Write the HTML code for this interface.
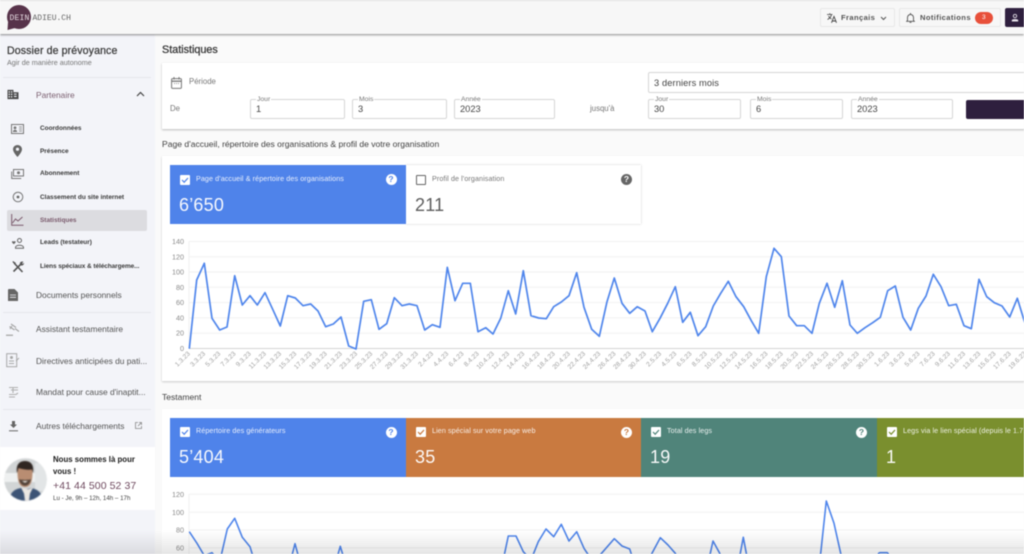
<!DOCTYPE html>
<html lang="fr">
<head>
<meta charset="utf-8">
<title>Statistiques</title>
<style>
html,body{margin:0;padding:0;width:1024px;height:554px;overflow:hidden;background:#fafafa}
body{font-family:"Liberation Sans",sans-serif;position:relative;color:#333}
#root{position:absolute;left:0;top:0;width:1024px;height:554px;overflow:hidden;filter:blur(.4px)}
.a{position:absolute}
.t{position:absolute;white-space:nowrap;line-height:1}
.sub{font-size:6.45px;font-weight:bold;color:#3a3a3a;left:40px;margin-top:.8px}
.nav{font-size:8.4px;color:#555;left:36px}
.div{position:absolute;left:3px;width:148px;height:1px;background:#e6e6ec}
.inp{position:absolute;height:18px;border:1px solid #d6d6d6;border-radius:2px;background:#fff}
.lab{position:absolute;left:5px;top:-4px;background:#fff;padding:0 1px;font-size:6.8px;line-height:7px;color:#777}
.val{position:absolute;left:5px;top:4px;font-size:9.3px;line-height:10px;color:#444}
.tile{position:absolute;height:59px;color:#fff;overflow:hidden}
.cb{position:absolute;left:10px;top:9.5px;width:10px;height:10px;background:#fff;border-radius:1px}
.cb svg{position:absolute;left:0;top:0}
.tl{position:absolute;left:26px;top:9.8px;font-size:7.15px;line-height:9px;white-space:nowrap;opacity:.88;letter-spacing:.1px}
.tv{position:absolute;left:9px;top:28.5px;font-size:18px;line-height:23px;letter-spacing:.2px;opacity:.95}
.q{position:absolute;top:9px;width:11px;height:11px;border-radius:50%;background:#fff;font-size:8.5px;line-height:11px;text-align:center;font-weight:bold}
.ax text{font-size:7.2px;fill:#8a8a8a;text-anchor:end}
.dl text{font-size:6.6px;fill:#a0a0a0;text-anchor:end}
.ic{position:absolute}
</style>
</head>
<body>
<div id="root">

<!-- sidebar -->
<div class="a" style="left:0;top:34px;width:155px;height:520px;background:#f3f4f9"></div>
<div class="t" style="left:7px;top:45.7px;font-size:10.6px;color:#3b3b3b;letter-spacing:.1px;-webkit-text-stroke:.25px #3b3b3b">Dossier de prévoyance</div>
<div class="t" style="left:7px;top:59px;font-size:7.2px;color:#777">Agir de manière autonome</div>
<div class="div" style="top:77px"></div>

<svg class="ic" style="left:7px;top:89px" width="12" height="11" viewBox="0 0 12 12"><path fill="#4a4a4a" d="M0 1h6.500v2.500H12V11H0zM1.200 2.500v1.500h1.400V2.500zM3.800 2.500v1.500h1.400V2.500zM1.200 5v1.500h1.400V5zM3.800 5v1.500h1.400V5zM1.200 7.800v1.500h1.400V7.800zM3.800 7.800v1.500h1.400V7.800zM7 5v1.200h3V5zM7 7.500v1.200h3V7.500z" fill-rule="evenodd"/></svg>
<div class="t nav" style="top:91px;color:#7b5f70">Partenaire</div>
<svg class="ic" style="left:136px;top:91px" width="9" height="6" viewBox="0 0 9 6"><path d="M1 5l3.500-3.500L8 5" fill="none" stroke="#444" stroke-width="1.200"/></svg>

<svg class="ic" style="left:11px;top:123.500px" width="13" height="10" viewBox="0 0 13 10"><rect x=".5" y=".5" width="12" height="9" fill="none" stroke="#777" stroke-width="1"/><circle cx="4" cy="3.800" r="1.400" fill="#777"/><path d="M1.800 8c0-3 4.400-3 4.400 0z" fill="#777"/><path d="M8 3h3M8 5h3M8 7h3" stroke="#777" stroke-width=".8"/></svg>
<div class="t sub" style="top:125px">Coordonnées</div>
<svg class="ic" style="left:13px;top:145px" width="9" height="12" viewBox="0 0 9 12"><path fill="#666" d="M4.500 0C2 0 0 2 0 4.300 0 7.500 4.500 12 4.500 12S9 7.500 9 4.300C9 2 7 0 4.500 0zm0 5.800a1.600 1.600 0 1 1 0-3.200 1.600 1.600 0 0 1 0 3.200z" fill-rule="evenodd"/></svg>
<div class="t sub" style="top:148px">Présence</div>
<svg class="ic" style="left:11px;top:169px" width="13" height="10" viewBox="0 0 13 10"><rect x="2.500" y=".5" width="10" height="6.500" fill="none" stroke="#777" stroke-width="1"/><circle cx="7.500" cy="3.700" r="1.500" fill="#777"/><path d="M.7 2.500v7h9.500" fill="none" stroke="#777" stroke-width="1"/></svg>
<div class="t sub" style="top:170.700px">Abonnement</div>
<svg class="ic" style="left:12px;top:191px" width="12" height="12" viewBox="0 0 12 12"><circle cx="6" cy="6" r="4.800" fill="none" stroke="#777" stroke-width="1"/><circle cx="6" cy="6" r="1.400" fill="#666"/></svg>
<div class="t sub" style="top:194px">Classement du site internet</div>
<div class="a" style="left:7px;top:210px;width:140px;height:20.500px;background:#dcdce0;border-radius:2px"></div>
<svg class="ic" style="left:11px;top:214px" width="13" height="12" viewBox="0 0 13 12"><path d="M.7 0v11.300H12.500" fill="none" stroke="#7a5a6c" stroke-width="1"/><path d="M1.500 9l3-4 2.500 2 4.500-4" fill="none" stroke="#7a5a6c" stroke-width="1"/></svg>
<div class="t sub" style="top:217px;color:#7a5a6c">Statistiques</div>
<svg class="ic" style="left:11px;top:238px" width="14" height="11" viewBox="0 0 14 11"><circle cx="8.500" cy="2.500" r="2" fill="none" stroke="#666" stroke-width="1"/><path d="M4.500 9.500c0-3 8-3 8 0v.8h-8z" fill="none" stroke="#666" stroke-width="1"/><path d="M1 3.500c1-.8 1.500-.3 1.800.2.300-.5 1-1 1.800-.2.500.8-1 2-1.800 2.700C2 5.500.5 4.300 1 3.500z" fill="#666"/></svg>
<div class="t sub" style="top:239.700px">Leads (testateur)</div>
<svg class="ic" style="left:12px;top:261px" width="12" height="12" viewBox="0 0 12 12"><path d="M2.500 2.500l8 8.500M10 2L1.500 10.500" stroke="#555" stroke-width="1.600" fill="none"/><path d="M1 0l3 2-1.500 1.500L.5 1zM7.800 2.500C8 .8 10 0 11.500.8L10 2.200l.8.800 1.200-1.200c.3 1.500-1 3-2.700 2.800z" fill="#555"/></svg>
<div class="t sub" style="top:263px;letter-spacing:-.06px">Liens spéciaux &amp; téléchargeme...</div>

<svg class="ic" style="left:8px;top:289px" width="10" height="12" viewBox="0 0 10 12"><path fill="#666" d="M1 0h5.500L10 3.500V12H0V1a1 1 0 0 1 1-1z"/><path d="M2 6h6M2 8.300h6" stroke="#f3f4f9" stroke-width=".8"/></svg>
<div class="t nav" style="top:291px">Documents personnels</div>
<div class="div" style="top:312px"></div>
<svg class="ic" style="left:6px;top:323px" width="14" height="13" viewBox="0 0 14 13"><path d="M5 1l5 3.500M3.500 3.500l5 3.500M6 3l-2 3M9 5.500l4 3" stroke="#a5a5a5" stroke-width="1.100" fill="none"/><path d="M0 11.500h7V13H0z" fill="#b0b0b0"/></svg>
<div class="t nav" style="top:325.200px">Assistant testamentaire</div>
<svg class="ic" style="left:6px;top:353px" width="14" height="15" viewBox="0 0 14 15"><rect x=".7" y=".7" width="10" height="13" fill="none" stroke="#a8a8a8" stroke-width="1"/><circle cx="5.500" cy="4.500" r="1.500" fill="#a8a8a8"/><path d="M3 8h5M3 10.500h5M10 8l3-3" stroke="#a8a8a8" stroke-width="1"/></svg>
<div class="t nav" style="top:356.500px">Directives anticipées du pati...</div>
<svg class="ic" style="left:8px;top:386px" width="11" height="13" viewBox="0 0 11 13"><path d="M1 1.500h9M3 4h7M5 1.500V7M1 8.500h7l2-1.500M1 11h6" stroke="#b0b0b0" stroke-width="1.100" fill="none"/></svg>
<div class="t nav" style="top:388px">Mandat pour cause d'inaptit...</div>
<div class="div" style="top:409px"></div>
<svg class="ic" style="left:9px;top:421px" width="9" height="11" viewBox="0 0 9 11"><path d="M3 0h3v3.500h2L4.500 7 1 3.500h2z" fill="#666"/><path d="M0 9.800h9" stroke="#666" stroke-width="1"/></svg>
<div class="t nav" style="top:421.800px">Autres téléchargements</div>
<svg class="ic" style="left:135px;top:422px" width="7" height="7" viewBox="0 0 7 7"><path d="M3 .5H.5v6h6V4M4 .5h2.500V3M6.500.5L3 4" fill="none" stroke="#888" stroke-width=".8"/></svg>

<!-- contact -->
<div class="a" style="left:0;top:447px;width:155px;height:62.500px;background:#fff"></div>
<svg class="ic" style="left:4px;top:458px;filter:blur(.5px)" width="43" height="43" viewBox="0 0 43 43">
<defs><clipPath id="cp"><circle cx="21.500" cy="21.500" r="21.300"/></clipPath></defs>
<g clip-path="url(#cp)">
<rect width="43" height="43" fill="#d2d5d6"/>
<rect x="0" y="15" width="43" height="9" fill="#eef0f0"/>
<rect x="31" y="5" width="12" height="28" fill="#e2e5e6"/>
<path d="M5 43c1-9 6-12 12-13l4 2 6-2c6 1 11 4 12 13z" fill="#3d5476"/>
<path d="M17 29.500l3 6 1 7.500h4l1-7.500 3-6-5 2z" fill="#ebe7e2"/>
<path d="M13.500 13c0-9 15-9 15 0 0 7-.5 16-7.500 16S13.500 20 13.500 13z" fill="#b98d72"/>
<path d="M13 15c-1.500-10 4-12 8-12s9.500 2 8 12l-1-3.500c-4 .5-9 0-13.500-1.500z" fill="#2f2622"/>
<path d="M15 21c1.500 9 10.500 9 12 0-1 1-3 .5-6 1-3-.5-5 0-6-1z" fill="#54443a"/>
<path d="M18 23h6l-3 1.800z" fill="#f0ece6"/>
</g></svg>
<div class="t" style="left:53px;top:455.500px;font-size:7.85px;font-weight:bold;color:#1c1c1c">Nous sommes là pour</div>
<div class="t" style="left:53px;top:468px;font-size:7.85px;font-weight:bold;color:#1c1c1c">vous !</div>
<div class="t" style="left:53px;top:481px;font-size:10.500px;color:#6f4a5f;letter-spacing:.08px">+41 44 500 52 37</div>
<div class="t" style="left:53px;top:496px;font-size:6.200px;color:#444">Lu - Je, 9h – 12h, 14h – 17h</div>

<!-- main heading -->
<div class="t" style="left:162px;top:45px;font-size:10.800px;color:#333;-webkit-text-stroke:.25px #333">Statistiques</div>

<!-- period card -->
<div class="a" style="left:162px;top:63px;width:870px;height:65.500px;background:#fff;box-shadow:0 1px 2px rgba(0,0,0,.25)"></div>
<svg class="ic" style="left:171px;top:77px" width="11" height="12" viewBox="0 0 11 12"><rect x=".6" y="1.600" width="9.800" height="9.800" rx="1" fill="none" stroke="#777" stroke-width="1"/><path d="M.6 4.200h9.800" stroke="#777" stroke-width="1.300"/><path d="M3 0v2.500M8 0v2.500" stroke="#777" stroke-width="1"/><path d="M3 6.500h1M5 6.500h1M7 6.500h1" stroke="#999" stroke-width="1"/></svg>
<div class="t" style="left:189px;top:78px;font-size:7.800px;color:#777">Période</div>
<div class="t" style="left:170px;top:105px;font-size:7.800px;color:#777">De</div>
<div class="t" style="left:590px;top:105px;font-size:7.800px;color:#777">jusqu'à</div>

<div class="inp" style="left:250px;top:99px;width:93px"><span class="lab">Jour</span><span class="val">1</span></div>
<div class="inp" style="left:352px;top:99px;width:93px"><span class="lab">Mois</span><span class="val">3</span></div>
<div class="inp" style="left:454px;top:99px;width:99px"><span class="lab">Année</span><span class="val">2023</span></div>
<div class="inp" style="left:648px;top:99px;width:91px"><span class="lab">Jour</span><span class="val">30</span></div>
<div class="inp" style="left:750px;top:99px;width:91px"><span class="lab">Mois</span><span class="val">6</span></div>
<div class="inp" style="left:851px;top:99px;width:100px"><span class="lab">Année</span><span class="val">2023</span></div>
<div class="inp" style="left:648px;top:72px;width:400px;height:19px"><span class="val" style="top:4.500px;left:5px;letter-spacing:.1px">3 derniers mois</span></div>
<div class="a" style="left:966px;top:100px;width:80px;height:19px;background:#2e1f3e;border-radius:2px"></div>

<!-- section 1 -->
<div class="t" style="left:162px;top:140px;font-size:8.550px;color:#3f3f3f">Page d'accueil, répertoire des organisations &amp; profil de votre organisation</div>
<div class="a" style="left:162px;top:156px;width:870px;height:225px;background:#fff;box-shadow:0 1px 2px rgba(0,0,0,.2)"></div>
<div class="a" style="left:406px;top:165px;width:235px;height:59px;background:#fff;box-shadow:0 0 2px rgba(0,0,0,.22)"></div>
<div class="tile" style="left:170px;top:165px;width:236px;background:#4f83ea">
  <div class="cb"><svg width="10" height="10" viewBox="0 0 10 10"><path d="M2 5l2.200 2.200L8 3" fill="none" stroke="#4f83ea" stroke-width="1.200"/></svg></div>
  <div class="tl">Page d'accueil &amp; répertoire des organisations</div>
  <div class="tv">6’650</div>
  <div class="q" style="left:215.500px;color:#4f83ea">?</div>
</div>
<div class="tile" style="left:406px;top:165px;width:235px;color:#666">
  <div class="cb" style="background:#fff;border:1px solid #666;width:8px;height:8px"></div>
  <div class="tl" style="color:#777;opacity:1">Profil de l'organisation</div>
  <div class="tv" style="color:#555">211</div>
  <div class="q" style="left:215px;background:#666;color:#fff">?</div>
</div>

<!-- chart 1 -->
<svg class="a" style="left:0;top:0" width="1024" height="554" viewBox="0 0 1024 554">
<g stroke="#f1f1f1" stroke-width="1">
<path d="M189 241.500H1024M189 256.800H1024M189 272H1024M189 287.300H1024M189 302.600H1024M189 317.900H1024M189 333.200H1024M189 241v108"/>
</g>
<path d="M189 348.500H1024" stroke="#d4d4d4" stroke-width="1"/>
<g class="ax">
<text x="184" y="244">140</text><text x="184" y="259.300">120</text><text x="184" y="274.500">100</text><text x="184" y="289.800">80</text><text x="184" y="305">60</text><text x="184" y="320.300">40</text><text x="184" y="335.600">20</text><text x="184" y="351">0</text>
</g>
<polyline fill="none" stroke="#5086ec" stroke-width="1.700" stroke-linejoin="round" points="189.300,348.700 196.700,280 204.300,263.300 212,318.300 219.700,330 227,327 234.700,275.700 242.300,305 250,295.700 257.300,305 265,292.700 272.700,309.300 280.300,326 287.700,295.700 295.300,298 303,305.700 310.700,304 318,311 325.700,326.700 333.300,324 341,317 348.700,346 356,349 363.700,301.300 371.300,299.700 379,329.300 386.700,323.700 394.300,297.700 402,305.700 409.300,304 417,305.700 424.700,330 432.300,324.700 440,327.300 447.300,267.300 455,300.700 462.700,283.300 470.300,283.300 478,331.700 485.700,327.700 493,334 500.700,318.300 508.300,290.700 515.700,314 523.300,270.700 531,315.700 538.700,318 546.300,318.700 553.700,306.700 561.300,302 569,295.700 576.700,272.700 584,307.300 591.700,329.300 599.300,336.300 607,301.700 614.300,278 622,303.300 629.700,313.300 637.300,306.700 645,311 652.300,331.700 660,318.300 667.700,303.300 675.300,286.700 682.700,322.300 690.300,312.300 698,335.700 705.700,326.700 713.300,306 720.700,293.300 728.300,281.300 736,296.700 743.700,306.700 751.300,320.700 758.700,333.300 766.300,276.700 774,248.300 781.300,256.700 789,316 796.700,325.700 804.300,325.700 812,333.300 819.300,303.300 827,283.300 834.700,307.300 842.300,280.700 850,325 857.300,333.300 865,327.700 872.700,322.700 880.300,317.300 887.700,290.700 895.300,286 903,317.300 910.700,330 918.300,308.300 926,296 933.300,274.300 941,286.700 948.700,305.700 956.300,304.300 964,325.700 971.300,328.700 979,279.300 986.700,296.700 994.300,302.700 1002,306 1009.700,317 1017.300,298.300 1025,323.300"/>
<g class="dl" transform="translate(190.500,354)">
<text transform="translate(0)rotate(-45)">1.3.23</text><text transform="translate(15.200)rotate(-45)">3.3.23</text><text transform="translate(30.400)rotate(-45)">5.3.23</text><text transform="translate(45.600)rotate(-45)">7.3.23</text><text transform="translate(60.800)rotate(-45)">9.3.23</text><text transform="translate(76)rotate(-45)">11.3.23</text><text transform="translate(91.200)rotate(-45)">13.3.23</text><text transform="translate(106.400)rotate(-45)">15.3.23</text><text transform="translate(121.600)rotate(-45)">17.3.23</text><text transform="translate(136.800)rotate(-45)">19.3.23</text><text transform="translate(152)rotate(-45)">21.3.23</text><text transform="translate(167.200)rotate(-45)">23.3.23</text><text transform="translate(182.400)rotate(-45)">25.3.23</text><text transform="translate(197.600)rotate(-45)">27.3.23</text><text transform="translate(212.800)rotate(-45)">29.3.23</text><text transform="translate(228)rotate(-45)">31.3.23</text>
<text transform="translate(243.200)rotate(-45)">2.4.23</text><text transform="translate(258.400)rotate(-45)">4.4.23</text><text transform="translate(273.600)rotate(-45)">6.4.23</text><text transform="translate(288.800)rotate(-45)">8.4.23</text><text transform="translate(304)rotate(-45)">10.4.23</text><text transform="translate(319.200)rotate(-45)">12.4.23</text><text transform="translate(334.400)rotate(-45)">14.4.23</text><text transform="translate(349.600)rotate(-45)">16.4.23</text><text transform="translate(364.800)rotate(-45)">18.4.23</text><text transform="translate(380)rotate(-45)">20.4.23</text><text transform="translate(395.200)rotate(-45)">22.4.23</text><text transform="translate(410.400)rotate(-45)">24.4.23</text><text transform="translate(425.600)rotate(-45)">26.4.23</text><text transform="translate(440.800)rotate(-45)">28.4.23</text><text transform="translate(456)rotate(-45)">30.4.23</text>
<text transform="translate(471.200)rotate(-45)">2.5.23</text><text transform="translate(486.400)rotate(-45)">4.5.23</text><text transform="translate(501.600)rotate(-45)">6.5.23</text><text transform="translate(516.800)rotate(-45)">8.5.23</text><text transform="translate(532)rotate(-45)">10.5.23</text><text transform="translate(547.200)rotate(-45)">12.5.23</text><text transform="translate(562.400)rotate(-45)">14.5.23</text><text transform="translate(577.600)rotate(-45)">16.5.23</text><text transform="translate(592.800)rotate(-45)">18.5.23</text><text transform="translate(608)rotate(-45)">20.5.23</text><text transform="translate(623.200)rotate(-45)">22.5.23</text><text transform="translate(638.400)rotate(-45)">24.5.23</text><text transform="translate(653.600)rotate(-45)">26.5.23</text><text transform="translate(668.800)rotate(-45)">28.5.23</text><text transform="translate(684)rotate(-45)">30.5.23</text>
<text transform="translate(699.200)rotate(-45)">1.6.23</text><text transform="translate(714.400)rotate(-45)">3.6.23</text><text transform="translate(729.600)rotate(-45)">5.6.23</text><text transform="translate(744.800)rotate(-45)">7.6.23</text><text transform="translate(760)rotate(-45)">9.6.23</text><text transform="translate(775.200)rotate(-45)">11.6.23</text><text transform="translate(790.400)rotate(-45)">13.6.23</text><text transform="translate(805.600)rotate(-45)">15.6.23</text><text transform="translate(820.800)rotate(-45)">17.6.23</text><text transform="translate(836)rotate(-45)">19.6.23</text>
</g>
</svg>

<!-- section 2 -->
<div class="t" style="left:162px;top:392.500px;font-size:8.550px;color:#3f3f3f">Testament</div>
<div class="a" style="left:162px;top:408.500px;width:870px;height:160px;background:#fff"></div>
<div class="tile" style="left:170px;top:417.500px;width:236px;background:#4f83ea">
  <div class="cb"><svg width="10" height="10" viewBox="0 0 10 10"><path d="M2 5l2.200 2.200L8 3" fill="none" stroke="#4f83ea" stroke-width="1.200"/></svg></div>
  <div class="tl">Répertoire des générateurs</div>
  <div class="tv">5’404</div>
  <div class="q" style="left:215.500px;color:#4f83ea">?</div>
</div>
<div class="tile" style="left:406px;top:417.500px;width:235px;background:#c97a40">
  <div class="cb" style="left:10px"><svg width="10" height="10" viewBox="0 0 10 10"><path d="M2 5l2.200 2.200L8 3" fill="none" stroke="#c97a40" stroke-width="1.200"/></svg></div>
  <div class="tl">Lien spécial sur votre page web</div>
  <div class="tv">35</div>
  <div class="q" style="left:215px;color:#c97a40">?</div>
</div>
<div class="tile" style="left:641px;top:417.500px;width:236px;background:#50847a">
  <div class="cb"><svg width="10" height="10" viewBox="0 0 10 10"><path d="M2 5l2.200 2.200L8 3" fill="none" stroke="#50847a" stroke-width="1.200"/></svg></div>
  <div class="tl">Total des legs</div>
  <div class="tv">19</div>
  <div class="q" style="left:215px;color:#50847a">?</div>
</div>
<div class="tile" style="left:877px;top:417.500px;width:170px;background:#7a8f2e">
  <div class="cb"><svg width="10" height="10" viewBox="0 0 10 10"><path d="M2 5l2.200 2.200L8 3" fill="none" stroke="#7a8f2e" stroke-width="1.200"/></svg></div>
  <div class="tl">Legs via le lien spécial (depuis le 1.7.2022)</div>
  <div class="tv">1</div>
</div>

<svg class="a" style="left:0;top:0" width="1024" height="554" viewBox="0 0 1024 554">
<path d="M189 494.300H1024M189 512.300H1024M189 530H1024M189 547.700H1024M189 494v60" stroke="#f1f1f1" stroke-width="1" fill="none"/>
<g class="ax">
<text x="184" y="497">120</text><text x="184" y="515">100</text><text x="184" y="532.700">80</text><text x="184" y="550.400">60</text>
</g>
<polyline fill="none" stroke="#5086ec" stroke-width="1.600" stroke-linejoin="round" points="189.300,531.700 197,543.300 204.300,555.700 212,552.700 219.700,562 227.300,529 234.700,518.300 242.300,537.300 250,546.700 257.700,572 287.700,572 295,543.700 302.700,572 333,572 340.300,546.300 348,572 500.700,572 508.300,536 516,536 523.300,551.700 531,560 538.300,541.700 546,529 553.700,536.700 561.300,524.300 569,541 576.700,531.700 584,548.300 591.700,560 599.200,556 614.300,538.700 622,546 629.700,549 637,572 644.500,572 652,553.300 660.300,537.700 668,545 675.300,553.300 682,572 703,572 710.300,553.300 713,541 719.700,553.300 725,572 735,572 740.300,553.300 743.300,537.300 746.300,553.300 751,572 815,572 820.700,553.300 826.300,501 834,523.300 840.700,553.300 845,572 872,572 878.700,553.300 879.700,552.700 887.300,552.700 888,553.300 892,572"/>
</svg>

<!-- header -->
<div class="a" style="left:0;top:0;width:1024px;height:34px;background:#f7f7f7;border-top:1px solid #e2e2e2;box-sizing:border-box;box-shadow:0 1px 2px rgba(0,0,0,.45)"></div>
<svg class="ic" style="left:6px;top:4px" width="26" height="27" viewBox="0 0 26 27"><circle cx="13" cy="13" r="12" fill="#57334a"/><path d="M2 18l-.5 8L9 24z" fill="#57334a"/></svg>
<div class="t" style="left:9.500px;top:14.500px;font-family:'Liberation Mono',monospace;font-size:8px;color:#e6dce2;letter-spacing:.2px">DEIN</div>
<div class="t" style="left:32.500px;top:14.500px;font-family:'Liberation Mono',monospace;font-size:8px;color:#666;letter-spacing:0">ADIEU.CH</div>

<div class="a" style="left:820px;top:8px;width:74.500px;height:19px;border:1px solid #e8e8e8;box-sizing:border-box;border-radius:2px"></div>
<svg class="ic" style="left:827px;top:13px" width="10" height="10" viewBox="0 0 10 10"><path d="M0 1.500h5.500M2.800.3v1.200M4.500 1.500C4 4 2.500 5.500.5 6.500M1.500 3c.7 1.500 1.800 2.500 3 3" fill="none" stroke="#444" stroke-width=".8"/><path d="M4.500 9.800L7 3.500l2.500 6.300M5.300 8h3.400" fill="none" stroke="#444" stroke-width=".9"/></svg>
<div class="t" style="left:841px;top:13.500px;font-size:7.600px;font-weight:bold;color:#555;letter-spacing:.38px">Français</div>
<svg class="ic" style="left:880px;top:16px" width="7" height="5" viewBox="0 0 7 5"><path d="M1 1l2.500 2.500L6 1" fill="none" stroke="#555" stroke-width="1"/></svg>

<div class="a" style="left:899px;top:8px;width:101.500px;height:19px;border:1px solid #e8e8e8;box-sizing:border-box;border-radius:2px"></div>
<svg class="ic" style="left:906px;top:13px" width="9" height="10" viewBox="0 0 9 10"><path d="M1.500 7.500V4.500a3 3 0 0 1 6 0v3l.8.8H.7z" fill="none" stroke="#555" stroke-width=".9"/><path d="M3.500 9.300h2M4.500 0v1" stroke="#555" stroke-width=".9"/></svg>
<div class="t" style="left:920px;top:13.500px;font-size:7.600px;font-weight:bold;color:#555;letter-spacing:.38px">Notifications</div>
<div class="a" style="left:975px;top:11.500px;width:17.500px;height:12.500px;border-radius:7px;background:#e8503a;color:#fff;font-size:6.500px;line-height:12.500px;text-align:center">3</div>

<div class="a" style="left:1005px;top:8px;width:40px;height:19px;background:#2e1f3e;border-radius:2px"></div>
<svg class="ic" style="left:1011px;top:13.500px" width="8" height="8" viewBox="0 0 8 8"><circle cx="4" cy="2" r="1.700" fill="none" stroke="#e8e4ec" stroke-width=".9"/><path d="M.8 7.500V6.300c0-1.600 6.400-1.600 6.400 0v1.200z" fill="#e8e4ec"/></svg>

<!-- bottom fade -->
<div class="a" style="left:0;top:530px;width:1024px;height:24px;background:linear-gradient(to bottom,rgba(0,0,0,0),rgba(0,0,0,.1))"></div>
</div>
</body>
</html>
